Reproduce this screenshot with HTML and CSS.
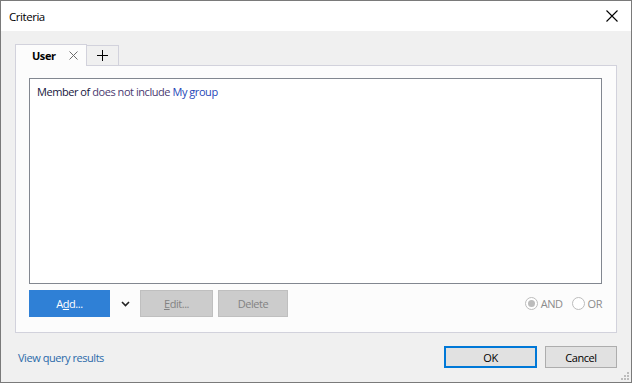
FILE: index.html
```html
<!DOCTYPE html>
<html lang="en">
<head>
    <meta charset="UTF-8">
    <title>Criteria</title>
    <link rel="stylesheet" href="styles.css">
</head>
<body>
    <div class="window">
        <div class="title-bar">
            <span class="title">Criteria</span>
            <svg class="close-icon" width="12" height="12" viewBox="0 0 12 12">
                <path d="M0.5 0.5 L11.5 11.5 M11.5 0.5 L0.5 11.5" stroke="#000" stroke-width="1.1" fill="none"/>
            </svg>
        </div>

        <div class="content">
            <div class="tabs">
                <div class="tab active">
                    <span class="tab-label">User</span>
                    <svg class="tab-close" width="9" height="9" viewBox="0 0 9 9">
                        <path d="M0.5 0.5 L8.5 8.5 M8.5 0.5 L0.5 8.5" stroke="#6d6d6d" stroke-width="1" fill="none"/>
                    </svg>
                </div>
                <div class="tab add-tab">
                    <svg width="11" height="11" viewBox="0 0 11 11">
                        <path d="M5.5 0 V11 M0 5.5 H11" stroke="#000" stroke-width="1" fill="none"/>
                    </svg>
                </div>
            </div>

            <div class="panel">
                <div class="criteria-list">
                    <div class="criteria-row">
                        <span class="field">Member of</span>
                        <span class="operator">does not include</span>
                        <span class="value">My group</span>
                    </div>
                </div>

                <div class="panel-actions">
                    <button class="btn btn-primary">A<u>d</u>d...</button>
                    <span class="dropdown">
                        <svg width="9" height="6" viewBox="0 0 9 6">
                            <path d="M1 1 L4.5 4.5 L8 1" stroke="#222" stroke-width="1.6" fill="none"/>
                        </svg>
                    </span>
                    <button class="btn btn-disabled btn-edit"><u>E</u>dit...</button>
                    <button class="btn btn-disabled btn-delete">Delete</button>

                    <div class="logic">
                        <label class="radio checked"><span class="circle"></span>AND</label>
                        <label class="radio"><span class="circle"></span>OR</label>
                    </div>
                </div>
            </div>

            <div class="footer">
                <a class="link" href="#">View query results</a>
                <div class="footer-buttons">
                    <button class="btn btn-ok">OK</button>
                    <button class="btn btn-cancel">Cancel</button>
                </div>
            </div>

            <svg class="grip" width="9" height="9" viewBox="0 0 9 9">
                <rect x="7" y="1" width="2" height="2" fill="#bcbcbc"/>
                <rect x="4" y="4" width="2" height="2" fill="#bcbcbc"/>
                <rect x="7" y="4" width="2" height="2" fill="#bcbcbc"/>
                <rect x="1" y="7" width="2" height="2" fill="#bcbcbc"/>
                <rect x="4" y="7" width="2" height="2" fill="#bcbcbc"/>
                <rect x="7" y="7" width="2" height="2" fill="#bcbcbc"/>
            </svg>
        </div>
    </div>
</body>
</html>
```

FILE: styles.css
```css
:root {
    --window-border: #7a7a7a;
    --bg-color: #f0f0f0;
    --panel-bg: #fcfcfc;
    --panel-border: #d2d2dc;
    --list-border: #828790;
    --accent: #2f80d6;
    --ui-font: 'Open Sans', 'Noto Sans', sans-serif;
}

* {
    box-sizing: border-box;
}

body {
    margin: 0;
    font-family: var(--ui-font);
    font-size: 11px;
    letter-spacing: -0.45px;
    color: #000;
    background: #fff;
}

.window {
    width: 632px;
    height: 383px;
    border: 1px solid var(--window-border);
    display: flex;
    flex-direction: column;
}

.title-bar {
    height: 30px;
    background: #fff;
    display: flex;
    align-items: center;
    justify-content: space-between;
    padding: 0 13px 0 8px;
}

.title {
    font-size: 11.5px;
}

.content {
    flex: 1;
    background: var(--bg-color);
    padding: 13px 14px 0 14px;
    position: relative;
}

/* tabs */
.tabs {
    display: flex;
    align-items: flex-end;
    height: 21px;
}

.tab {
    height: 21px;
    border: 1px solid var(--panel-border);
    border-bottom: none;
    display: flex;
    align-items: center;
}

.tab.active {
    width: 72px;
    height: 22px;
    background: var(--panel-bg);
    padding: 0 8px 0 16px;
    justify-content: space-between;
    position: relative;
    margin-bottom: -1px;
    z-index: 1;
}

.tab-label {
    font-weight: bold;
}

.add-tab {
    width: 33px;
    height: 20px;
    margin-left: -1px;
    justify-content: center;
    background: var(--bg-color);
}

.panel {
    height: 268px;
    background: var(--panel-bg);
    border: 1px solid var(--panel-border);
    padding: 12px 14px 0 13px;
}

.criteria-list {
    height: 206px;
    background: #fff;
    border: 1px solid var(--list-border);
    padding: 5px 7px;
}

.field {
    color: #161640;
}

.operator {
    color: #4a3a70;
}

.value {
    color: #1f47b8;
}

.panel-actions {
    display: flex;
    align-items: center;
    margin-top: 6px;
    height: 27px;
}

.btn {
    font-family: var(--ui-font);
    font-size: 11px;
    letter-spacing: -0.45px;
    border: 1px solid transparent;
    padding: 0;
    height: 27px;
}

.btn-primary {
    width: 81px;
    background: var(--accent);
    border-color: var(--accent);
    color: #fff;
}

.dropdown {
    width: 30px;
    height: 27px;
    display: flex;
    align-items: center;
    justify-content: center;
    padding-top: 1px;
}

.btn-disabled {
    background: #cccccc;
    border-color: #bfbfbf;
    color: #838383;
}

.btn-edit {
    width: 73px;
}

.btn-delete {
    width: 70px;
    margin-left: 5px;
}

.logic {
    margin-left: auto;
    display: flex;
    align-items: center;
    gap: 9px;
    color: #8c8c8c;
}

.radio {
    display: flex;
    align-items: center;
    gap: 3px;
}

.circle {
    width: 13px;
    height: 13px;
    border: 1px solid #bcbcbc;
    border-radius: 50%;
    background: #fff;
    display: flex;
    align-items: center;
    justify-content: center;
}

.radio.checked .circle::after {
    content: '';
    width: 7px;
    height: 7px;
    border-radius: 50%;
    background: #bcbcbc;
}

/* footer */
.footer {
    display: flex;
    justify-content: space-between;
    align-items: center;
    padding: 13px 0 0 3px;
}

.link {
    color: #2b6aaa;
    text-decoration: none;
}

.footer-buttons {
    display: flex;
    gap: 8px;
}

.btn-ok {
    width: 93px;
    height: 22px;
    background: #e1e1e1;
    border: 2px solid #0078d7;
}

.btn-cancel {
    width: 72px;
    height: 22px;
    background: #e1e1e1;
    border-color: #adadad;
}

.grip {
    position: absolute;
    right: 2px;
    bottom: 2px;
}
```
